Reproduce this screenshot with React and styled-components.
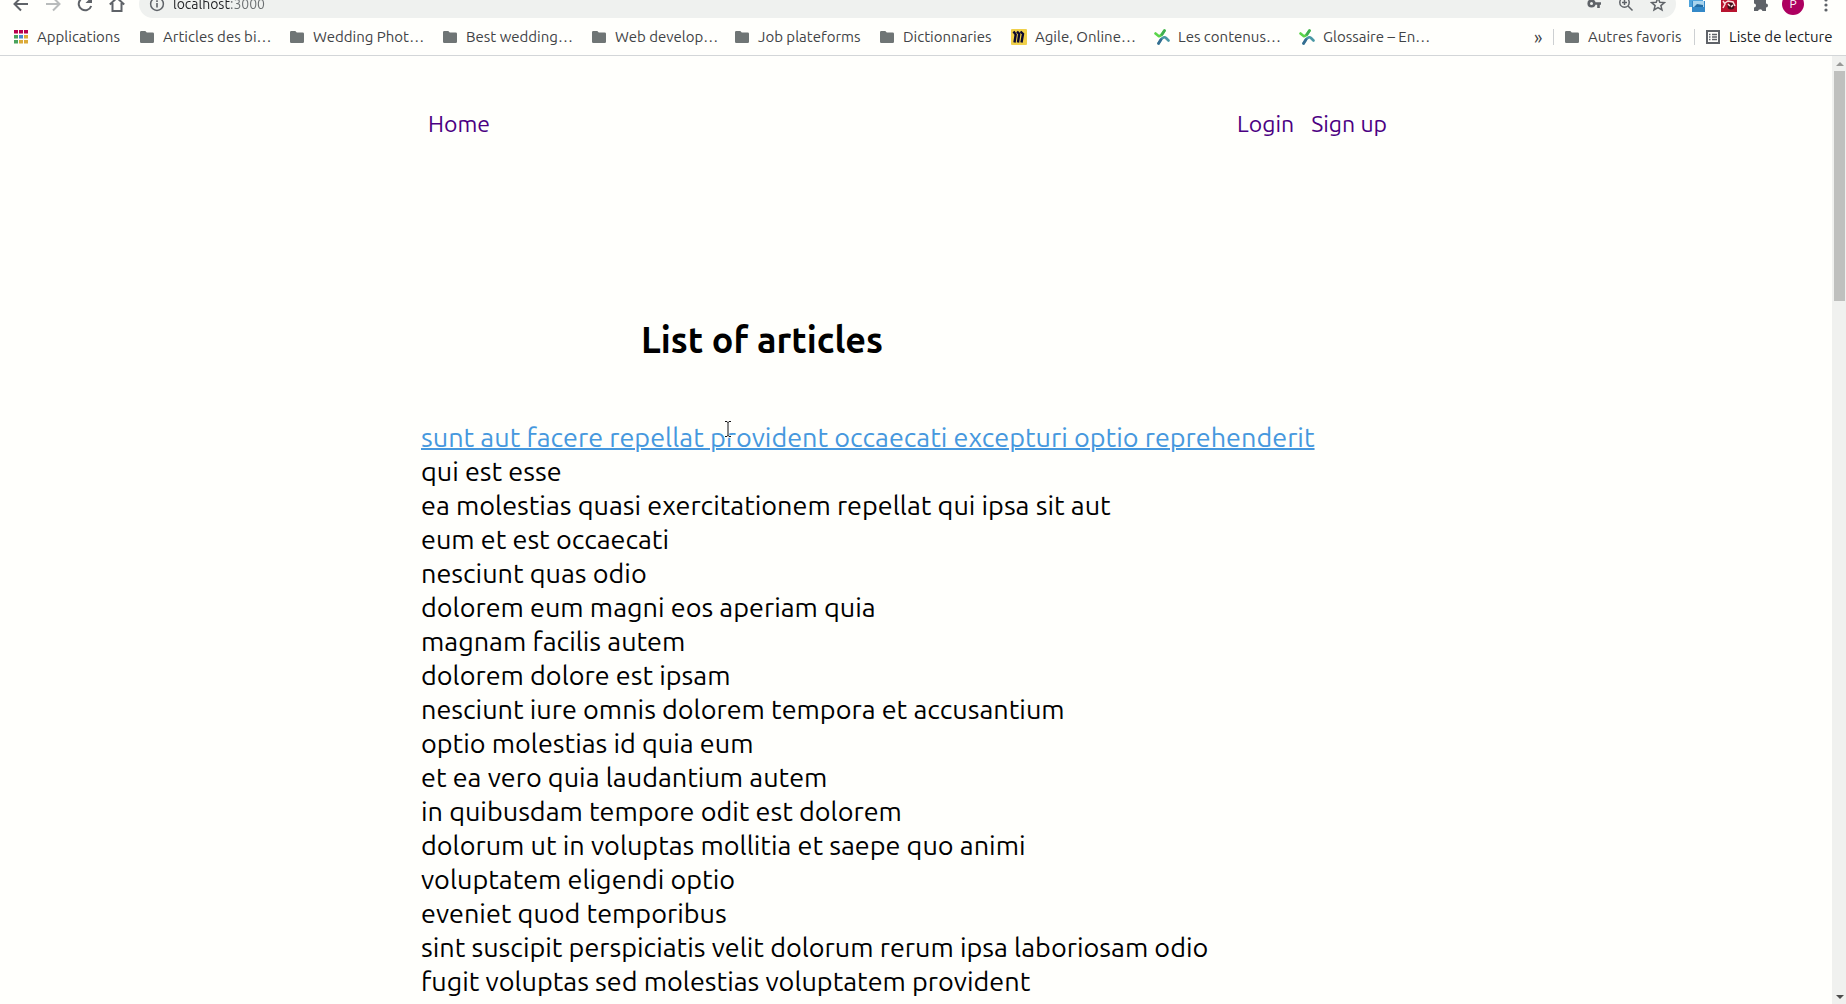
import React from "react";
import styled, { createGlobalStyle } from "styled-components";

const GlobalStyle = createGlobalStyle`
  * { box-sizing: border-box; }
  body {
    margin: 0;
    background: #fffffc;
    color: #000;
    font-family: Ubuntu, "Noto Sans", sans-serif;
  }
  button, input { font: inherit; }
`;

const Browser = styled.div`
  display: flex;
  flex-direction: column;
  height: 100vh;
  overflow: hidden;
`;

const Toolbar = styled.header`
  display: flex;
  align-items: flex-end;
  flex: none;
  height: 18px;
  padding: 0 4px 0 9px;
  overflow: hidden;
`;

const IconButton = styled.button`
  display: grid;
  place-items: center;
  flex: none;
  width: ${(p) => p.$width || 32}px;
  height: 28px;
  padding: 0;
  border: 0;
  background: none;
  color: ${(p) => (p.$muted ? "#b9bcbc" : "#5f6368")};

  svg { display: block; }
`;

const NavButtons = styled.div`
  display: flex;
  width: 130px;
  margin-left: -4px;
`;

const AddressBar = styled.div`
  display: flex;
  align-items: center;
  flex: 1;
  height: 28px;
  margin-left: 4px;
  padding: 0 2px;
  border-radius: 14px;
  background: #eff1ef;
`;

const Address = styled.input`
  flex: 1;
  min-width: 0;
  height: 28px;
  padding: 0;
  border: 0;
  outline: 0;
  color: #202124;
  background: linear-gradient(90deg, #202124 58px, #6a6e70 58px);
  background-clip: text;
  -webkit-text-fill-color: transparent;
  font-size: 14px;
`;

const Extensions = styled.div`
  display: flex;
  margin-left: 5px;
`;

const Avatar = styled.span`
  display: grid;
  place-items: center;
  width: 22px;
  height: 22px;
  border-radius: 50%;
  background: #ad0060;
  color: #fff;
  font-size: 12px;
  line-height: 12px;
`;

const BookmarksBar = styled.nav`
  display: flex;
  align-items: center;
  flex: none;
  height: 38px;
  padding: 0 12px 0 14px;
  border-bottom: 1px solid #d3d6d8;
`;

const Bookmark = styled.button`
  display: flex;
  align-items: center;
  gap: ${(p) => (p.$wide ? 8 : 9)}px;
  flex: none;
  width: ${(p) => p.$width}px;
  height: 28px;
  padding: 0;
  border: 0;
  background: none;
  color: ${(p) => (p.$dark ? "#202124" : "#3f4346")};
  font-size: 15px;
  line-height: 20px;
  white-space: nowrap;

  svg { display: block; flex: none; }
`;

const Overflow = styled.button`
  width: 19px;
  margin-left: auto;
  padding: 0;
  border: 0;
  background: none;
  color: #3f4346;
  font-size: 18px;
  line-height: 20px;
  text-align: left;
`;

const Divider = styled.span`
  flex: none;
  width: 1px;
  height: 16px;
  margin-right: 11px;
  background: #cdd0d2;
`;

const Viewport = styled.div`
  display: flex;
  flex: 1;
  min-height: 0;
`;

const Page = styled.div`
  flex: 1;
  overflow: hidden;
`;

const Container = styled.div`
  position: relative;
  max-width: 990px;
  margin: 0 auto;
  padding-top: 53px;
`;

const SiteNav = styled.nav`
  display: flex;
  justify-content: space-between;
  padding: 0 24px 0 7px;
`;

const NavGroup = styled.div`
  display: flex;
  gap: 17px;
`;

const NavLink = styled.a`
  color: #4b0082;
  font-size: 23px;
  line-height: 30px;
  text-decoration: none;
`;

const Title = styled.h1`
  margin: 180px 0 59px 220px;
  font-size: 36px;
  line-height: 42px;
  font-weight: 700;
`;

const List = styled.ul`
  margin: 0;
  padding: 0;
  list-style: none;
`;

const Article = styled.li`
  font-size: 27px;
  line-height: 34px;
  white-space: nowrap;
`;

const ArticleLink = styled.a`
  color: ${(p) => (p.$active ? "#4698de" : "inherit")};
  text-decoration: ${(p) => (p.$active ? "underline" : "none")};
  text-decoration-thickness: 2px;
`;

const Pointer = styled.svg`
  position: absolute;
  top: 364px;
  left: 303px;
`;

const Scrollbar = styled.div`
  display: flex;
  flex-direction: column;
  align-items: center;
  flex: none;
  width: 14px;
  padding: 5px 1px 4px 2px;
  background: #f0f1ef;
`;

const Thumb = styled.div`
  width: 11px;
  height: 230px;
  margin: 5px 0 auto;
  background: #bfc0be;
`;

const Folder = () => (
  <svg width="14" height="12" viewBox="0 0 14 12" aria-hidden="true">
    <path d="M1.3 0h4l1.5 1.5h5.9A1.3 1.3 0 0 1 14 2.8v7.9a1.3 1.3 0 0 1-1.3 1.3H1.3A1.3 1.3 0 0 1 0 10.7V1.3A1.3 1.3 0 0 1 1.3 0z" fill="#6f7575" />
  </svg>
);

const Apps = () => (
  <svg width="14" height="14" viewBox="0 0 14 14" aria-hidden="true">
    {["#b8004c", "#b8004c", "#b8004c", "#4aa35c", "#4489d0", "#dcaa38", "#4aa35c", "#dcaa38", "#dcaa38"].map((c, i) => (
      <rect key={i} x={(i % 3) * 5} y={Math.floor(i / 3) * 5} width="4" height="3.5" fill={c} />
    ))}
  </svg>
);

const Miro = () => (
  <svg width="16" height="16" viewBox="0 0 16 16" aria-hidden="true">
    <rect width="16" height="16" rx="1" fill="#f0d04a" />
    <path d="M2.5 2.5l2.200 3L3.500 13.500M6 2.500l2.200 2.500L7 13.500M9.500 2.500l2.500 2.500-1.500 8.500" fill="none" stroke="#0a0830" strokeWidth="2.4" />
  </svg>
);

const Cross = () => (
  <svg width="16" height="16" viewBox="0 0 16 16" fill="none" strokeLinecap="round" strokeWidth="2.6" aria-hidden="true">
    <path d="M1.500 4.500l3 2.500c2 1 3.500-1.500 6-5.500" stroke="#5bd54a" />
    <path d="M8 5.500l2.500-4" stroke="#3fae52" />
    <path d="M4.500 14.500l2.500-4c1.500-2 3.500-3 5-1.500l2.500 2.500" stroke="#4a98a5" />
    <path d="M4.500 14.500l2.500-4" stroke="#356d92" />
  </svg>
);

const ReadingList = () => (
  <svg width="14" height="14" viewBox="0 0 14 14" aria-hidden="true">
    <rect x="1" y="1" width="12" height="12" fill="none" stroke="#5f6368" strokeWidth="2" />
    <path d="M3 4.500h1.500M6 4.500h5M3 7h1.500M6 7h5M3 9.500h1.500M6 9.500h5" stroke="#5f6368" strokeWidth="1.3" />
  </svg>
);

const Glyph = ({ children, size = 16 }) => (
  <svg width={size} height={size} viewBox="0 0 16 16" fill="none" stroke="currentColor" strokeWidth="2" aria-hidden="true">
    {children}
  </svg>
);

const bookmarks = [
  { label: "Applications", width: 126, Icon: Apps },
  { label: "Articles des bi…", width: 150, Icon: Folder },
  { label: "Wedding Phot…", width: 153, Icon: Folder },
  { label: "Best wedding…", width: 149, Icon: Folder },
  { label: "Web develop…", width: 143, Icon: Folder },
  { label: "Job plateforms", width: 145, Icon: Folder },
  { label: "Dictionnaries", width: 131, Icon: Folder },
  { label: "Agile, Online…", width: 143, Icon: Miro, wide: true },
  { label: "Les contenus…", width: 145, Icon: Cross, wide: true },
  { label: "Glossaire – En…", width: 140, Icon: Cross, wide: true },
];

const articles = [
  "sunt aut facere repellat provident occaecati excepturi optio reprehenderit",
  "qui est esse",
  "ea molestias quasi exercitationem repellat qui ipsa sit aut",
  "eum et est occaecati",
  "nesciunt quas odio",
  "dolorem eum magni eos aperiam quia",
  "magnam facilis autem",
  "dolorem dolore est ipsam",
  "nesciunt iure omnis dolorem tempora et accusantium",
  "optio molestias id quia eum",
  "et ea vero quia laudantium autem",
  "in quibusdam tempore odit est dolorem",
  "dolorum ut in voluptas mollitia et saepe quo animi",
  "voluptatem eligendi optio",
  "eveniet quod temporibus",
  "sint suscipit perspiciatis velit dolorum rerum ipsa laboriosam odio",
  "fugit voluptas sed molestias voluptatem provident",
];

export default function App() {
  return (
    <Browser>
      <GlobalStyle />
      <Toolbar>
        <NavButtons>
          <IconButton aria-label="Back">
            <Glyph><path d="M15 8H2M8 1.500L1.500 8 8 14.500" /></Glyph>
          </IconButton>
          <IconButton aria-label="Forward" $muted>
            <Glyph><path d="M1 8h13M8 1.500L14.500 8 8 14.500" /></Glyph>
          </IconButton>
          <IconButton aria-label="Reload">
            <Glyph>
              <path d="M13.200 4A6.400 6.400 0 1 0 14.200 10" />
              <path d="M15 .5V7H8.500z" fill="currentColor" stroke="none" />
            </Glyph>
          </IconButton>
          <IconButton aria-label="Home page">
            <Glyph><path d="M.8 8.500L8 1.800l7.200 6.700M3.500 7v8h9V7" /></Glyph>
          </IconButton>
        </NavButtons>
        <AddressBar>
          <IconButton aria-label="Site information">
            <Glyph>
              <circle cx="8" cy="8" r="6.4" strokeWidth="1.5" />
              <path d="M8 7v4.500M8 4.200v1.800" strokeWidth="1.6" />
            </Glyph>
          </IconButton>
          <Address aria-label="Address" defaultValue="localhost:3000" />
          <IconButton aria-label="Passwords">
            <svg width="14" height="10" viewBox="0 0 14 10" fill="none" stroke="currentColor" aria-hidden="true">
              <circle cx="4.5" cy="4.5" r="2.8" strokeWidth="2.6" />
              <path d="M7 4.500h7M11.500 5v4" strokeWidth="2.6" />
            </svg>
          </IconButton>
          <IconButton aria-label="Zoom">
            <Glyph>
              <circle cx="6.5" cy="6.5" r="4.7" strokeWidth="1.5" />
              <path d="M10 10l4.500 4.500M4 6.500h5M6.500 4v5" strokeWidth="1.5" />
            </Glyph>
          </IconButton>
          <IconButton aria-label="Add bookmark">
            <Glyph><path d="M8 2l1.800 4.200 4.600.4-3.500 3 1.100 4.400L8 11.700 4 14l1.100-4.400-3.500-3 4.600-.4z" strokeWidth="1.5" /></Glyph>
          </IconButton>
        </AddressBar>
        <Extensions>
          <IconButton aria-label="Screenshot extension">
            <svg width="16" height="16" viewBox="0 0 16 16" aria-hidden="true">
              <rect width="14" height="11" fill="#4ea3dc" />
              <rect x="3" y="5" width="13" height="11" fill="#3489c8" />
              <path d="M4 5h11v6H4z" fill="#a8d4ee" />
              <path d="M5 11l3-3 6 1v2z" fill="#236da5" />
            </svg>
          </IconButton>
          <IconButton aria-label="Red extension">
            <svg width="16" height="16" viewBox="0 0 16 16" aria-hidden="true">
              <rect width="16" height="16" fill="#b8142f" />
              <circle cx="10" cy="10" r="3.5" fill="#40101a" />
              <path d="M2 5l2 3-2 4M4 7l3-2 5 1 2 4M7 8l2 2M12 9l-2 2" fill="none" stroke="#f8dede" strokeWidth="1.5" />
            </svg>
          </IconButton>
          <IconButton aria-label="Extensions">
            <Glyph>
              <path d="M1 4h4a2.300 2.300 0 0 1 4.500 0H13v3.500a2 2 0 0 1 0 4V15H9.500a2.300 2.300 0 0 0-4.500 0H1v-3.500a2 2 0 0 0 0-4z" fill="currentColor" stroke="none" />
            </Glyph>
          </IconButton>
          <IconButton aria-label="Profile"><Avatar>P</Avatar></IconButton>
          <IconButton aria-label="Menu" $width={33}>
            <Glyph>
              <circle cx="8" cy="4" r="1.6" fill="currentColor" stroke="none" />
              <circle cx="8" cy="9" r="1.6" fill="currentColor" stroke="none" />
              <circle cx="8" cy="14" r="1.6" fill="currentColor" stroke="none" />
            </Glyph>
          </IconButton>
        </Extensions>
      </Toolbar>

      <BookmarksBar aria-label="Bookmarks">
        {bookmarks.map(({ label, width, Icon, wide }) => (
          <Bookmark key={label} $width={width} $wide={wide}>
            <Icon />
            {label}
          </Bookmark>
        ))}
        <Overflow>»</Overflow>
        <Divider />
        <Bookmark $width={129}>
          <Folder />
          Autres favoris
        </Bookmark>
        <Divider />
        <Bookmark $width={128} $dark>
          <ReadingList />
          Liste de lecture
        </Bookmark>
      </BookmarksBar>

      <Viewport>
        <Page>
          <Container>
            <SiteNav>
              <NavLink href="#home">Home</NavLink>
              <NavGroup>
                <NavLink href="#login">Login</NavLink>
                <NavLink href="#signup">Sign up</NavLink>
              </NavGroup>
            </SiteNav>
            <main>
              <Title>List of articles</Title>
              <List>
                {articles.map((title, i) => (
                  <Article key={title}>
                    <ArticleLink href={`#article-${i + 1}`} $active={i === 0}>{title}</ArticleLink>
                  </Article>
                ))}
              </List>
            </main>
            <Pointer width="8" height="18" viewBox="0 0 8 18" fill="none" aria-hidden="true">
              <path d="M1 1.500h2l1 1 1-1h2M4 2v14M1 16.500h2l1-1 1 1h2" stroke="#fff" strokeWidth="2.5" />
              <path d="M1 1.500h2l1 1 1-1h2M4 2v14M1 16.500h2l1-1 1 1h2" stroke="#111" />
            </Pointer>
          </Container>
        </Page>
        <Scrollbar aria-hidden="true">
          <svg width="8" height="5" viewBox="0 0 8 5"><path d="M0 5l4-4 4 4z" fill="#989997" /></svg>
          <Thumb />
          <svg width="8" height="5" viewBox="0 0 8 5"><path d="M0 0h8L4 4z" fill="#4c4d4c" /></svg>
        </Scrollbar>
      </Viewport>
    </Browser>
  );
}
